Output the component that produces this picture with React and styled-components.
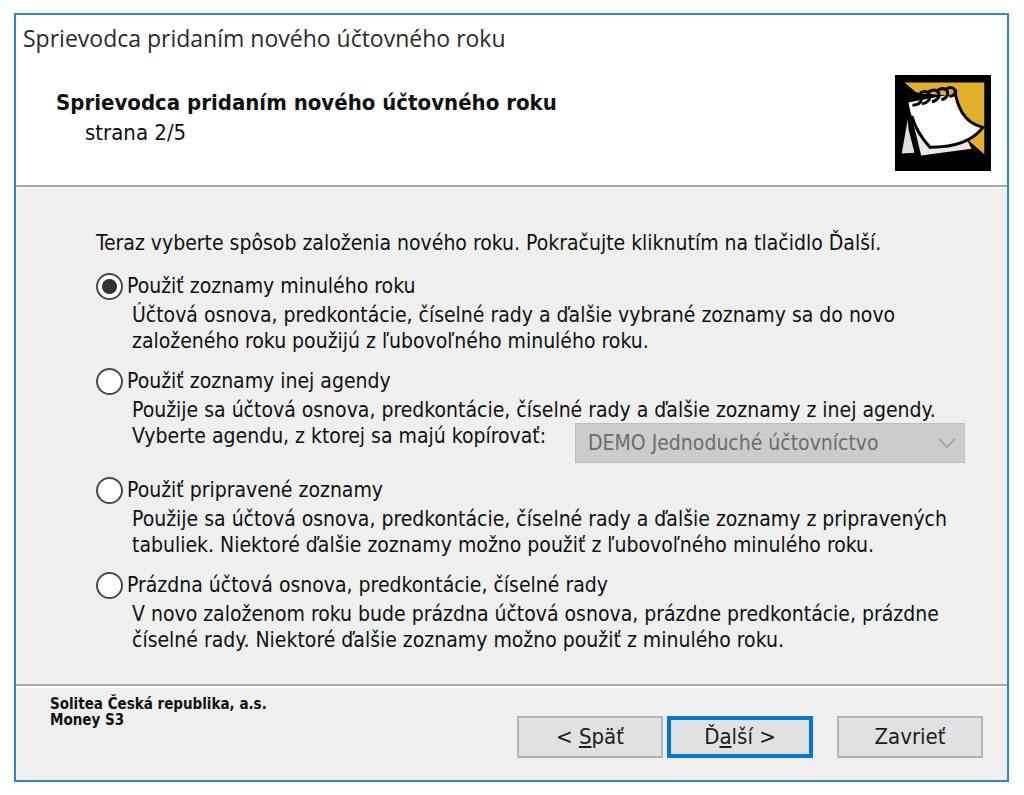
import React from 'react';
import styled, { createGlobalStyle } from 'styled-components';

const GlobalStyle = createGlobalStyle`
  * {
    box-sizing: border-box;
  }
  body {
    margin: 0;
    background: #ffffff;
    color: #111111;
    font-family: "DejaVu Sans Condensed", "Noto Sans", sans-serif;
    font-size: 21px;
    line-height: 26px;
  }
`;

function NotepadIcon () {
  return (
    <Picture viewBox="0 0 286 286" aria-hidden="true">
      <rect width="286" height="286" fill="#000000" />
      <path d="M28 22H266V236L220 196L150 60L66 54Z" fill="#e0b02c" />
      <path d="M38 132L20 234L58 232L40 160Z" fill="#dedede" />
      <path d="M40 84L78 240L228 220L216 196L100 214Z" fill="#e8e8e8" />
      <path
        d="M40 82L178 56Q184 84 200 112Q220 146 262 156Q216 216 104 215Q56 158 40 82Z"
        fill="#ffffff"
      />
      <path
        d="M178 48Q184 84 200 112Q220 146 262 156Q216 216 104 215Q64 172 50 122"
        fill="none"
        stroke="#000000"
        strokeWidth="9"
      />
      <g fill="none" stroke="#000000" strokeWidth="9">
        <path d="M52 90Q80 88 78 70Q72 50 52 58" />
        <path d="M80 86Q108 80 104 60Q96 42 74 54" />
        <path d="M110 80Q136 72 130 53Q120 38 100 50" />
        <path d="M138 74Q162 66 156 48Q146 34 126 46" />
        <path d="M162 64Q186 58 180 46Q168 30 150 44" />
      </g>
    </Picture>
  );
}

function Option ({ id, title, defaultChecked, children }) {
  return (
    <OptionBlock>
      <OptionLabel htmlFor={id}>
        <Radio
          type="radio"
          name="source"
          id={id}
          defaultChecked={defaultChecked}
          aria-describedby={`${id}-text`}
        />
        {title}
      </OptionLabel>
      <Description id={`${id}-text`}>{children}</Description>
    </OptionBlock>
  );
}

function App () {
  return (
    <>
    <GlobalStyle />
    <Dialog>
      <Header>
        <TitleBar>Sprievodca pridaním nového účtovného roku</TitleBar>
        <Banner>
          <div>
            <Heading>Sprievodca pridaním nového účtovného roku</Heading>
            <PageNumber>strana 2/5</PageNumber>
          </div>
          <NotepadIcon />
        </Banner>
      </Header>

      <Content>
        <Intro>Teraz vyberte spôsob založenia nového roku. Pokračujte kliknutím na tlačidlo Ďalší.</Intro>
        <Option id="last-year" title="Použiť zoznamy minulého roku" defaultChecked>
          Účtová osnova, predkontácie, číselné rady a ďalšie vybrané zoznamy sa do novo<br />
          založeného roku použijú z ľubovoľného minulého roku.
        </Option>
        <Option id="other-agenda" title="Použiť zoznamy inej agendy">
          Použije sa účtová osnova, predkontácie, číselné rady a ďalšie zoznamy z inej agendy.
          <AgendaRow>
            <label htmlFor="agenda">Vyberte agendu, z ktorej sa majú kopírovať:</label>
            <SelectBox>
              <Select id="agenda" disabled>
                <option>DEMO Jednoduché účtovníctvo</option>
              </Select>
              <Chevron viewBox="0 0 18 10" aria-hidden="true">
                <path d="M1 1L9 9L17 1" fill="none" stroke="#9a9a9a" strokeWidth="1.5" />
              </Chevron>
            </SelectBox>
          </AgendaRow>
        </Option>
        <Option id="prepared" title="Použiť pripravené zoznamy">
          Použije sa účtová osnova, predkontácie, číselné rady a ďalšie zoznamy z pripravených<br />
          tabuliek. Niektoré ďalšie zoznamy možno použiť z ľubovoľného minulého roku.
        </Option>
        <Option id="empty" title="Prázdna účtová osnova, predkontácie, číselné rady">
          V novo založenom roku bude prázdna účtová osnova, prázdne predkontácie, prázdne<br />
          číselné rady. Niektoré ďalšie zoznamy možno použiť z minulého roku.
        </Option>
      </Content>

      <Footer>
        <Company>
          Solitea Česká republika, a.s.<br />
          Money S3
        </Company>
        <Buttons>
          <Button type="button">&lt; <u>S</u>päť</Button>
          <Button type="button" $primary>Ď<u>a</u>lší &gt;</Button>
          <CloseButton type="button">Zavrieť</CloseButton>
        </Buttons>
      </Footer>
    </Dialog>
    </>
  );
}

const Dialog = styled.main`
  margin: 13px 15px 13px 14px;
  border: 2px solid #2a8ad8;
  background: #efefef;
`;

const Header = styled.header`
  background: #ffffff;
  border-bottom: 2px solid #a8a8a8;
`;

const TitleBar = styled.div`
  padding: 10px 7px 11px;
  font-family: "Open Sans", "Noto Sans", sans-serif;
  font-size: 23px;
  color: #2b2b2b;
`;

const Banner = styled.div`
  display: flex;
  justify-content: space-between;
  padding: 13px 16px 14px 40px;
`;

const Heading = styled.h1`
  margin: 15px 0 4px;
  font-size: 22px;
  line-height: 26px;
  white-space: nowrap;
`;

const PageNumber = styled.div`
  padding-left: 29px;
  font-size: 22px;
`;

const Picture = styled.svg`
  width: 96px;
  height: 96px;
  flex: none;
`;

const Content = styled.form`
  display: flex;
  flex-direction: column;
  gap: 11px;
  padding: 41px 0 31px 80px;
  border-top: 2px solid #f8f8f8;
  white-space: nowrap;
`;

const Intro = styled.p`
  margin: 0 0 3px;
`;

const OptionBlock = styled.div`
  display: flex;
  flex-direction: column;
`;

const OptionLabel = styled.label`
  display: flex;
  align-items: center;
  gap: 4px;
  height: 32px;
`;

const Radio = styled.input`
  appearance: none;
  width: 27px;
  height: 27px;
  margin: 0;
  border: 2px solid #4a4a4a;
  border-radius: 50%;
  background: #ffffff;

  &:checked {
    background: radial-gradient(circle, #333333 7px, #ffffff 8px);
  }
`;

const Description = styled.div`
  padding-left: 36px;
`;

const AgendaRow = styled.div`
  display: flex;
  justify-content: space-between;
  padding-right: 42px;
`;

const SelectBox = styled.div`
  display: grid;
  align-items: center;
  width: 390px;
`;

const Select = styled.select`
  grid-area: 1 / 1;
  appearance: none;
  width: 100%;
  height: 40px;
  padding: 0 12px;
  border: 1px solid #bfbfbf;
  border-radius: 0;
  background: #cccccc;
  color: #6d6d6d;
  opacity: 1;
  font: inherit;
`;

const Chevron = styled.svg`
  grid-area: 1 / 1;
  justify-self: end;
  width: 18px;
  height: 10px;
  margin-right: 9px;
  pointer-events: none;
`;

const Footer = styled.footer`
  display: flex;
  justify-content: space-between;
  padding: 10px 24px 22px 34px;
  border-top: 2px solid #a8a8a8;
  box-shadow: inset 0 2px 0 #ffffff;
`;

const Company = styled.div`
  font-size: 15px;
  line-height: 16px;
  font-weight: bold;
  white-space: nowrap;
`;

const Buttons = styled.div`
  display: flex;
  gap: 4px;
  padding-top: 20px;
`;

const Button = styled.button`
  width: 146px;
  height: 42px;
  padding: 0;
  border: ${({ $primary }) => ($primary ? '4px solid #0078d7' : '2px solid #b4b4b4')};
  background: #e1e1e1;
  color: #1c1c1c;
  font: inherit;
  font-size: 22px;
`;

const CloseButton = styled(Button)`
  margin-left: 20px;
`;

export default App;
